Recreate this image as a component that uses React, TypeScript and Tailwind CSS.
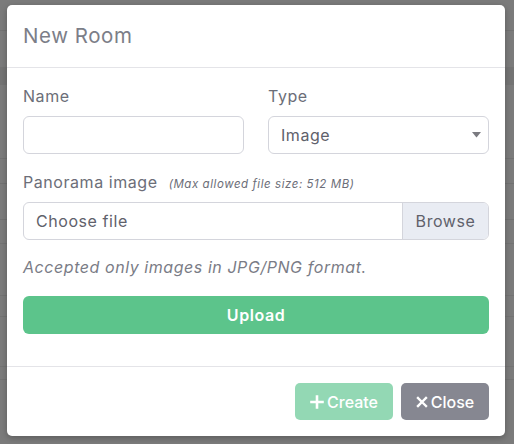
import React from "react";

function PlusIcon() {
  return (
    <svg width="14" height="14" viewBox="0 0 14 14" className="mr-[3px]">
      <path d="M7 1.5v11M1.5 7h11" stroke="white" strokeWidth="2.6" strokeLinecap="square" />
    </svg>
  );
}

function XIcon() {
  return (
    <svg width="12" height="12" viewBox="0 0 12 12" className="mr-[3px]">
      <path d="M2 2l8 8M10 2l-8 8" stroke="white" strokeWidth="2.4" strokeLinecap="square" />
    </svg>
  );
}

export default function App() {
  return (
    <div
      className="relative w-[514px] h-[444px] overflow-hidden bg-[#7b7b7b] tracking-[0.035em]"
      style={{ fontFamily: "Inter, 'Open Sans', sans-serif" }}
    >
      {/* faint content behind overlay */}
      <div className="flex flex-col">
        <div className="h-[31px] border-b border-[#727272]" />
        <div className="h-[36px]" />
        <div className="h-[18px] bg-[#747474]" />
        <div className="h-[74px] border-b border-[#727272]" />
        <div className="h-[25px] border-b border-[#717171]" />
        <div className="h-[36px] border-b border-[#717171]" />
        <div className="h-[24px] border-b border-[#737373]" />
        <div className="h-[52px] border-b border-[#737373]" />
        <div className="h-[21px] border-b border-[#737373]" />
        <div className="h-[50px] border-b border-[#737373]" />
        <div className="h-[13px] border-b border-[#737373]" />
      </div>

      <div className="absolute left-[7px] top-[5px] w-[498px] bg-white rounded-[5px] shadow-[0_2px_6px_rgba(0,0,0,0.25)]">
        {/* header */}
        <div className="px-4 py-4 border-b border-[#e4e4e8]">
          <div className="text-[20.5px] leading-[30px] text-[#7c7e88]">New Room</div>
        </div>

        {/* body */}
        <div className="px-4 pt-4 pb-8">
          <div className="grid grid-cols-2 gap-6">
            <div>
              <div className="text-[16px] leading-6 text-[#6c6e78] mb-2">Name</div>
              <div className="h-[38px] rounded-[6px] border border-[#d4d5dc] bg-white" />
            </div>
            <div>
              <div className="text-[16px] leading-6 text-[#6c6e78] mb-2">Type</div>
              <div className="h-[38px] rounded-[6px] border border-[#d4d5dc] bg-white flex items-center pl-[12px] pr-[7px]">
                <span className="flex-1 text-[16px] text-[#5f616b]">Image</span>
                <svg width="9" height="6" viewBox="0 0 9 6">
                  <path d="M0 0h9L4.5 5.5z" fill="#7a7a80" />
                </svg>
              </div>
            </div>
          </div>

          <div className="mt-4 flex items-baseline">
            <span className="text-[16px] leading-6 text-[#6c6e78]">Panorama image</span>
            <span className="ml-[11px] text-[11.5px] italic text-[#6c6e78]">
              (Max allowed file size: 512 MB)
            </span>
          </div>
          <div className="mt-2 h-[38px] rounded-[6px] border border-[#d4d5dc] flex overflow-hidden">
            <div className="flex-1 flex items-center pl-[12px] text-[16px] text-[#5f616b]">Choose file</div>
            <div className="w-[86px] bg-[#e9ecf3] border-l border-[#d4d5dc] flex items-center justify-center text-[16px] text-[#5f616b]">
              Browse
            </div>
          </div>

          <div className="mt-[15px] text-[16px] leading-6 italic text-[#7a7c86]">
            Accepted only images in JPG/PNG format.
          </div>

          <div className="mt-[17px] h-[38px] rounded-[6px] bg-[#5cc48b] flex items-center justify-center text-white text-[16px] font-semibold">
            Upload
          </div>
        </div>

        {/* footer */}
        <div className="border-t border-[#e4e4e8] px-4 pt-4 pb-4 flex justify-end gap-2">
          <div className="w-[98px] h-[37px] rounded-[5px] bg-[#93d8b4] flex items-center justify-center text-white text-[16px] font-medium tracking-normal">
            <PlusIcon />
            Create
          </div>
          <div className="w-[88px] h-[37px] rounded-[5px] bg-[#868791] flex items-center justify-center text-white text-[16px] font-medium tracking-normal">
            <XIcon />
            Close
          </div>
        </div>
      </div>
    </div>
  );
}
